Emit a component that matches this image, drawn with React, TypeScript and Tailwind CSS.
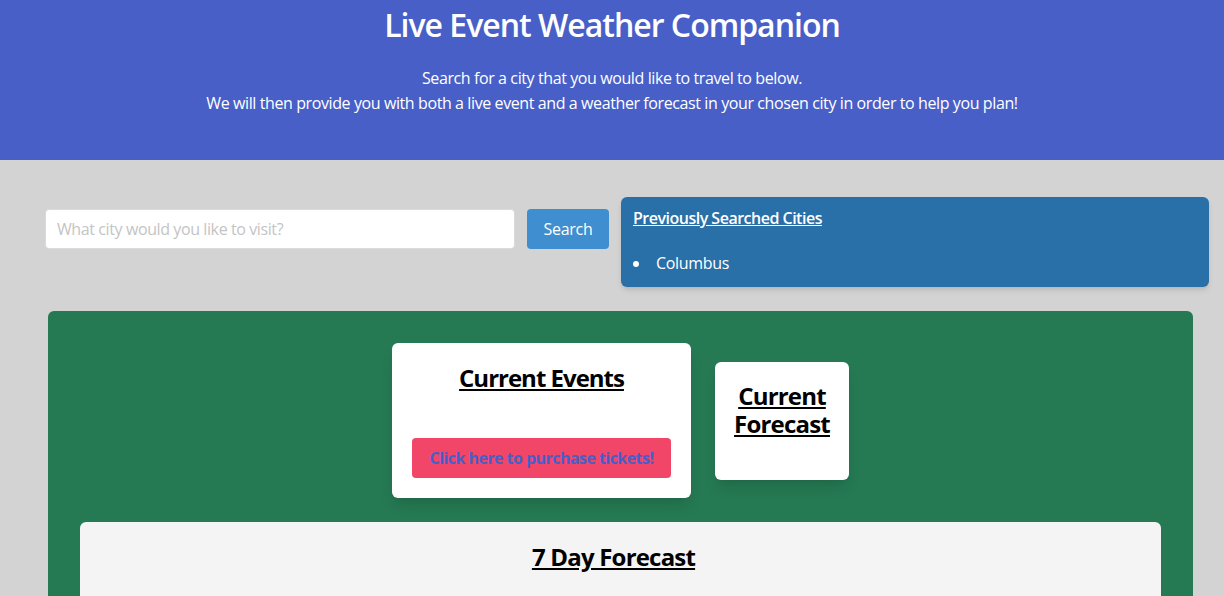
export default function App() {
  const cities = ["Columbus"];

  return (
    <div className="min-h-screen bg-[#d3d3d3] font-['Open_Sans',sans-serif] text-[#4a4a4a]">
      {/* Hero */}
      <header className="h-[160px] bg-[#485fc7] text-white text-center pt-[4px]">
        <h1 className="text-[32px] font-semibold leading-[42px] tracking-[-1px]">Live Event Weather Companion</h1>
        <div className="mt-[20px] text-[16px] leading-[25px] tracking-[-0.4px]">
          <p>Search for a city that you would like to travel to below.</p>
          <p>We will then provide you with both a live event and a weather forecast in your chosen city in order to help you plan!</p>
        </div>
      </header>

      {/* Search row */}
      <div className="flex items-start pl-[45px] pr-[15px] pt-[37px]">
        <div className="flex items-center gap-3 pt-3">
          <input
            type="text"
            placeholder="What city would you like to visit?"
            className="w-[470px] h-10 rounded border border-[#dbdbdb] bg-white px-[11px] text-[16px] tracking-[-0.4px] placeholder:text-[#c4c4c4] outline-none"
          />
          <button className="h-10 w-[82px] rounded bg-[#3e8ed0] text-white text-[16px] tracking-[-0.3px]">Search</button>
        </div>
        <div className="ml-3 w-[588px] rounded-md bg-[#296fa8] px-3 pt-[9px] pb-3 text-white shadow-md">
          <h2 className="text-[16px] font-semibold leading-6 tracking-[-0.5px] underline">Previously Searched Cities</h2>
          <ul className="mt-[21px] list-disc pl-[18px] text-[16px] leading-6 tracking-[-0.3px]">
            {cities.map((c) => (
              <li key={c} className="pl-[5px]">{c}</li>
            ))}
          </ul>
        </div>
      </div>

      {/* Results */}
      <main className="ml-[48px] mr-[31px] mt-6 rounded-md bg-[#257953] px-8 pt-8 pb-8">
        <div className="flex items-center justify-center gap-6">
          <div className="w-[299px] rounded-md bg-white px-5 pt-5 pb-5 text-center shadow-lg">
            <h3 className="text-[24px] font-bold leading-[30px] tracking-[-1px] text-black underline">Current Events</h3>
            <button className="mt-[45px] h-10 w-full rounded bg-[#f14668] text-[16px] font-bold tracking-[-0.55px] text-[#485fc7]">
              Click here to purchase tickets!
            </button>
          </div>
          <div className="w-[134px] rounded-md bg-white pt-5 pb-[42px] text-center shadow-lg">
            <h3 className="text-[24px] font-bold leading-[28px] tracking-[-0.8px] text-black underline">
              Current
              <br />
              Forecast
            </h3>
          </div>
        </div>
        <section className="mt-6 h-[200px] rounded-md bg-[#f4f4f4] pt-5 pr-[14px] text-center">
          <h3 className="text-[24px] font-bold leading-[30px] tracking-[-0.8px] text-black underline">7 Day Forecast</h3>
        </section>
      </main>
    </div>
  );
}
